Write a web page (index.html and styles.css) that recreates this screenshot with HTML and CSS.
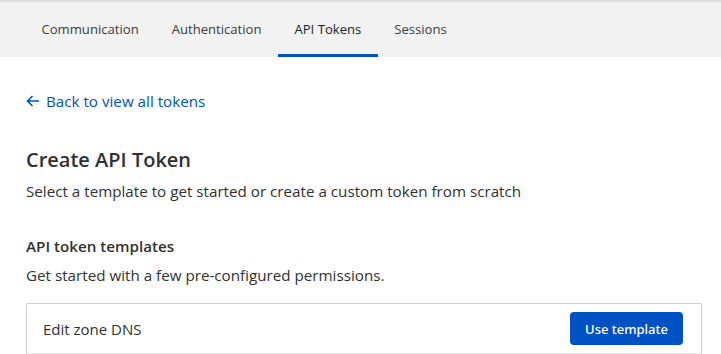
FILE: index.html
```html
<!DOCTYPE html>
<html lang="en">
<head>
  <meta charset="UTF-8">
  <title>API Tokens</title>
  <link rel="stylesheet" href="styles.css">
</head>
<body>
  <nav class="tabs">
    <a class="tab">Communication</a>
    <a class="tab">Authentication</a>
    <a class="tab active">API Tokens</a>
    <a class="tab">Sessions</a>
  </nav>
  <main class="page">
    <a class="back-link" href="#">
      <svg class="back-icon" width="14" height="12" viewBox="0 0 14 12" fill="none" stroke="currentColor" stroke-width="1.6">
        <path d="M13 6H1.5M6.5 1L1.5 6l5 5"/>
      </svg>
      Back to view all tokens
    </a>
    <h1>Create API Token</h1>
    <p class="lead">Select a template to get started or create a custom token from scratch</p>
    <h2>API token templates</h2>
    <p class="lead small-gap">Get started with a few pre-configured permissions.</p>
    <div class="card">
      <div class="card-row">
        <span class="row-title">Edit zone DNS</span>
        <button class="btn">Use template</button>
      </div>
    </div>
  </main>
</body>
</html>
```
FILE: styles.css
```css
* {
  box-sizing: border-box;
  margin: 0;
  padding: 0;
}
body {
  font-family: 'Open Sans', 'Noto Sans', sans-serif;
  background: #fff;
  color: #313131;
  font-size: 15px;
  line-height: 20px;
}
.tabs {
  display: flex;
  height: 57px;
  padding-left: 25px;
  background: #f2f2f2;
  border-top: 2px solid #dcdcdc;
}
.tab {
  display: flex;
  align-items: center;
  padding: 1px 16.5px 0;
  font-size: 13.1px;
  color: #3a3a3a;
  border-bottom: 3px solid transparent;
  cursor: pointer;
}
.tab.active {
  color: #222;
  border-bottom-color: #0051c3;
}
.page {
  padding: 34px 26px 0;
}
.back-link {
  display: inline-flex;
  align-items: center;
  gap: 6px;
  color: #0051c3;
  font-size: 15.2px;
  text-decoration: none;
}
.back-icon {
  flex: none;
}
h1 {
  margin-top: 36px;
  font-size: 20px;
  line-height: 26px;
  font-weight: 600;
  color: #313131;
}
.lead {
  margin-top: 8px;
  font-size: 15.2px;
  color: #313131;
}
h2 {
  margin-top: 35px;
  font-size: 15.2px;
  font-weight: 600;
}
.lead.small-gap {
  margin-top: 9px;
}
.card {
  margin-top: 18px;
  border: 1px solid #cfcfcf;
  border-bottom: none;
  border-radius: 2px 2px 0 0;
  margin-right: -7px;
}
.card-row {
  display: flex;
  align-items: center;
  justify-content: space-between;
  padding: 8px 18px 8px 16px;
  border-bottom: 1px solid #e5e5e5;
}
.row-title {
  font-size: 15px;
}
.btn {
  font-family: 'Noto Sans', sans-serif;
  background: #0051c3;
  color: #fff;
  border: none;
  border-radius: 4px;
  height: 33px;
  padding: 0 15px;
  font-size: 13px;
  font-weight: 500;
  cursor: pointer;
}
```
